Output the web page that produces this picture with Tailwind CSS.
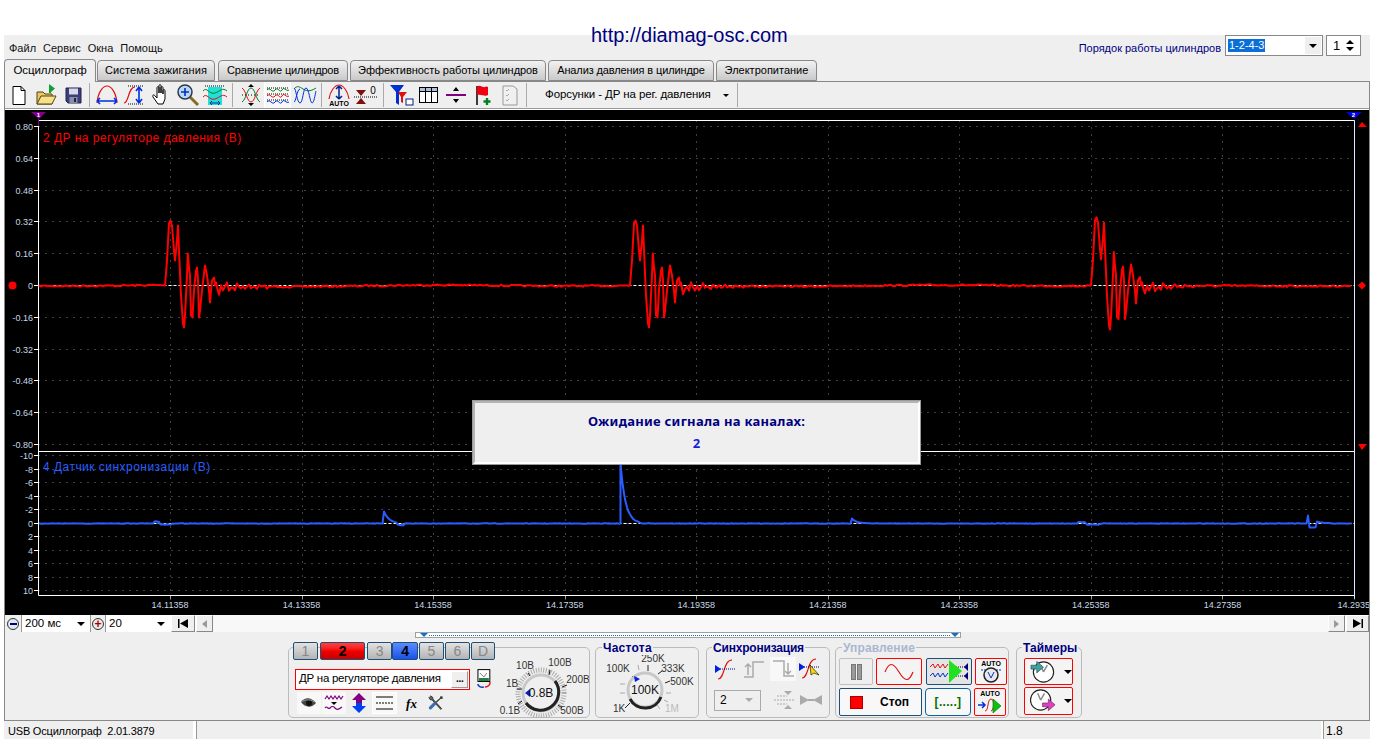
<!DOCTYPE html>
<html lang="ru">
<head>
  <meta charset="UTF-8">
  <title>USB Осциллограф</title>
  <script src="https://cdn.jsdelivr.net/npm/@tailwindcss/browser@4"></script>
</head>
<body class="bg-white">
<div class="relative w-[1382px] h-[744px] overflow-hidden bg-white font-['Liberation_Sans',sans-serif] text-[11px] text-black pt-[35px] pl-[4px]">

  <div class="absolute left-[591px] top-[23px] text-[20px] leading-[24px] text-[#000080] z-10">http://diamag-osc.com</div>

  <div class="w-[1366px] h-[704px] bg-[#efefef] flex flex-col">
    <!-- menu -->
    <div class="h-[25px] flex items-center pl-[5px] relative">
      <div class="flex gap-[7px] text-[#111] text-[11px] mt-[2px]">
        <span>Файл</span><span>Сервис</span><span>Окна</span><span>Помощь</span>
      </div>
      <div class="ml-auto flex items-start mr-[9px] -mt-[3px]">
        <span class="text-[#000080] mt-[5px] mr-[4px]">Порядок работы цилиндров</span>
        <div class="w-[98px] h-[21px] bg-white border border-[#888] flex items-center justify-between pl-[2px] pr-[1px]">
          <span class="bg-[#0a6fd8] text-white px-[1px] h-[13px] leading-[13px]">1-2-4-3</span>
          <span class="w-[16px] h-[17px] bg-[#efefef] flex items-center justify-center"><span class="w-0 h-0 border-x-[4px] border-x-transparent border-t-[4px] border-t-black"></span></span>
        </div>
        <div class="w-[35px] h-[21px] ml-[3px] bg-white border border-[#888] flex items-center justify-between pl-[6px] pr-[6px] text-[13px]">
          <span>1</span>
          <span class="flex flex-col gap-[3px]"><span class="block w-0 h-0 border-x-[4px] border-x-transparent border-b-[4px] border-b-black"></span><span class="block w-0 h-0 border-x-[4px] border-x-transparent border-t-[4px] border-t-black"></span></span>
        </div>
      </div>
    </div>

    <!-- tabs -->
    <div class="h-[22px] flex items-end relative z-10 -mb-[1px]">
      <div class="w-[92px] h-[23px] bg-[#efefef] border border-b-0 border-[#888] rounded-t-[4px] flex items-center justify-center text-[11.5px] tracking-[-0.1px]">Осциллограф</div>
      <div class="w-[118px] h-[21px] ml-[1px] mb-[1px] bg-linear-to-b from-[#f2f2f2] to-[#c9c9c9] border border-[#888] rounded-t-[4px] flex items-center justify-center tracking-[0.12px]">Система зажигания</div>
      <div class="w-[130px] h-[21px] ml-[3px] mb-[1px] bg-linear-to-b from-[#f2f2f2] to-[#c9c9c9] border border-[#888] rounded-t-[4px] flex items-center justify-center tracking-[-0.17px]">Сравнение цилиндров</div>
      <div class="w-[196px] h-[21px] ml-[2px] mb-[1px] bg-linear-to-b from-[#f2f2f2] to-[#c9c9c9] border border-[#888] rounded-t-[4px] flex items-center justify-center tracking-[-0.06px]">Эффективность работы цилиндров</div>
      <div class="w-[166px] h-[21px] ml-[2px] mb-[1px] bg-linear-to-b from-[#f2f2f2] to-[#c9c9c9] border border-[#888] rounded-t-[4px] flex items-center justify-center tracking-[-0.12px]">Анализ давления в цилиндре</div>
      <div class="w-[101px] h-[21px] ml-[2px] mb-[1px] bg-linear-to-b from-[#f2f2f2] to-[#c9c9c9] border border-[#888] rounded-t-[4px] flex items-center justify-center">Электропитание</div>
    </div>

    <!-- tab frame -->
    <div class="w-[1366px] h-[640px] border border-[#888] flex flex-col shrink-0">
      <!-- toolbar -->
      <div class="h-[27px] flex items-center border-b border-[#999] shrink-0">
        <div class="flex w-[27px] justify-center">
          <svg width="24" height="24" viewBox="0 0 24 24"><path d="M6 3.500h8l4 4v14H6z" fill="#fff" stroke="#000"/><path d="M14 3.500v4h4" fill="none" stroke="#000"/></svg>
        </div>
        <div class="flex w-[27px] justify-center">
          <svg width="24" height="24" viewBox="0 0 24 24"><path d="M3 9h6l2 2h7v10H3z" fill="#e8c860" stroke="#554410"/><path d="M3 21l4-8h15l-4 8z" fill="#f6e08a" stroke="#554410"/><path d="M15 10V1l6 4.500-4 3.500v1z" fill="#10a030"/></svg>
        </div>
        <div class="flex w-[27px] justify-center">
          <svg width="24" height="24" viewBox="0 0 24 24"><path d="M5 5h15v15H7l-2-2z" fill="#3a3f7a" stroke="#202050"/><rect x="8" y="5.500" width="9" height="6" fill="#d8d8e8"/><rect x="8.500" y="14" width="8" height="6" fill="#8a8fa8"/><rect x="13" y="15" width="2" height="4" fill="#202050"/></svg>
        </div>
        <div class="w-[1px] h-[24px] bg-[#aaa] mx-[3px] shrink-0"></div>
        <div class="flex w-[27px] justify-center">
          <svg width="26" height="24" viewBox="0 0 26 24" fill="none"><path d="M3 20C4 9 9 3 13 3s9 6 10 17" stroke="#e01010" stroke-width="1.200"/><path d="M3 18h20M3 18l3-3M3 18l3 3M23 18l-3-3M23 18l-3 3" stroke="#0030e0" stroke-width="1.600"/></svg>
        </div>
        <div class="flex w-[27px] justify-center">
          <svg width="26" height="24" viewBox="0 0 26 24" fill="none"><path d="M3 20c5 0 4-16 11-16" stroke="#e01010" stroke-width="1.200"/><path d="M7 3h15M7 21h15" stroke="#000" stroke-dasharray="1 1"/><path d="M18 4v16M18 4l-3 4M18 4l3 4M18 20l-3-4M18 20l3-4" stroke="#0030e0" stroke-width="1.600"/></svg>
        </div>
        <div class="flex w-[27px] justify-center">
          <svg width="24" height="24" viewBox="0 0 24 24"><path d="M9 21l-5-7c-1-2 1-3 2-1l2 2V5c0-2 2-2 2 0v5-7c0-2 2-2 2 0v7-5c0-2 2-2 2 0v6-3c0-2 2-2 2 0v8l-2 5z" fill="#fff" stroke="#000"/></svg>
        </div>
        <div class="flex w-[27px] justify-center">
          <svg width="26" height="24" viewBox="0 0 26 24" fill="none"><path d="M15 14l8 8" stroke="#8a6a20" stroke-width="3"/><circle cx="10" cy="9" r="7" fill="#bcd8f0" stroke="#2a3a50" stroke-width="1.500"/><path d="M10 5v8M6 9h8" stroke="#0030c0" stroke-width="1.600"/></svg>
        </div>
        <div class="flex w-[27px] justify-center">
          <svg width="26" height="24" viewBox="0 0 26 24" fill="none"><rect x="6" y="4" width="14" height="18" fill="#20e0d8"/><path d="M1 8c4-5 6 4 12 2s7-6 12-2" stroke="#008020"/><path d="M1 14c4-5 6 4 12 2s7-6 12-2" stroke="#e01010"/><path d="M3 3h20" stroke="#000" stroke-dasharray="1 1"/><path d="M8 20h10M8 20l2-2M8 20l2 2M18 20l-2-2M18 20l-2 2" stroke="#0030a0"/></svg>
        </div>
        <div class="w-[1px] h-[24px] bg-[#aaa] mx-[4px] shrink-0"></div>
        <div class="flex w-[27px] justify-center">
          <svg width="24" height="24" viewBox="0 0 24 24" fill="none"><path d="M3 5c4 2 5 14 9 14s5-12 9-14" stroke="#e01010"/><path d="M3 19c4-2 5-14 9-14s5 12 9 14" stroke="#008020"/><path d="M3 12h18" stroke="#000" stroke-dasharray="1 2"/><path d="M12 1l-3 3h6zM12 23l-3-3h6z" fill="#000"/></svg>
        </div>
        <div class="flex w-[27px] h-[26px] justify-center items-center bg-[#f8f8f8] border-x border-white">
          <svg width="24" height="24" viewBox="0 0 24 24" fill="none"><path d="M1 5h22M1 11h22M1 17h22" stroke="#000" stroke-dasharray="1 1"/><path d="M1 7c3-4 5 4 8 0s5 4 7 0 4 2 7 0" stroke="#008020"/><path d="M1 13c3-4 5 4 8 0s5 4 7 0 4 2 7 0" stroke="#e01010"/><path d="M1 19c3-4 5 4 8 0s5 4 7 0 4 2 7 0" stroke="#0030e0"/></svg>
        </div>
        <div class="flex w-[27px] justify-center">
          <svg width="26" height="24" viewBox="0 0 26 24" fill="none"><path d="M2 6c3-4 6-2 9 0s7 3 13-1" stroke="#008020"/><path d="M2 5c2 0 3 15 6 15s3-15 6-15 4 15 6 15 3-8 4-12" stroke="#0030e0"/><path d="M2 19c2 0 3-13 6-13" stroke="#0030e0"/></svg>
        </div>
        <div class="w-[1px] h-[24px] bg-[#aaa] mx-[3px] shrink-0"></div>
        <div class="flex w-[27px] justify-center">
          <svg width="26" height="24" viewBox="0 0 26 24" fill="none"><path d="M3 16C4 8 9 2 13 2s9 6 10 14" stroke="#e01010" stroke-width="1.200"/><path d="M13 3v13M13 3l-3 3M13 3l3 3M13 16l-3-3M13 16l3-3" stroke="#002090" stroke-width="1.500"/><text x="13" y="23" text-anchor="middle" font-size="7" font-weight="700" fill="#000">AUTO</text></svg>
        </div>
        <div class="flex w-[27px] justify-center">
          <svg width="26" height="24" viewBox="0 0 26 24" fill="none"><path d="M3 7h10l-5 6zM3 21h10l-5-6z" fill="#801010"/><path d="M1 14h24" stroke="#000" stroke-dasharray="1 1"/><text x="20" y="11" text-anchor="middle" font-size="10" fill="#000">0</text></svg>
        </div>
        <div class="w-[1px] h-[24px] bg-[#aaa] mx-[4px] shrink-0"></div>
        <div class="flex w-[27px] justify-center">
          <svg width="26" height="24" viewBox="0 0 26 24" fill="none"><path d="M1 2h14l-5 7v13l-3-2V9z" fill="#0030d0"/><path d="M9 9h9l-4 5v6l-2-1v-5z" fill="#e01010"/><rect x="17" y="16" width="7" height="6" fill="#fff" stroke="#002080"/></svg>
        </div>
        <div class="flex w-[27px] justify-center">
          <svg width="22" height="20" viewBox="0 0 22 20" fill="none"><rect x="1.500" y="2.500" width="18" height="15" stroke="#000" fill="#fff"/><rect x="1.500" y="2.500" width="18" height="4" fill="#b0c0e0" stroke="#000"/><path d="M7.500 2.500v15M13.500 2.500v15" stroke="#000"/></svg>
        </div>
        <div class="flex w-[27px] justify-center">
          <svg width="24" height="24" viewBox="0 0 24 24" fill="none"><path d="M2 12h20" stroke="#800080" stroke-width="2"/><path d="M12 4l-3 4h6zM12 20l-3-4h6z" fill="#000"/></svg>
        </div>
        <div class="flex w-[27px] justify-center">
          <svg width="22" height="24" viewBox="0 0 22 24" fill="none"><path d="M5 3v19" stroke="#000" stroke-width="1.500"/><path d="M5 4c3-3 5 1 8 0s2 0 3 0v8c-3 2-6-1-11 0z" fill="#f00010"/><path d="M15 15v7M11.500 18.500h7" stroke="#008020" stroke-width="2.400"/></svg>
        </div>
        <div class="flex w-[27px] justify-center">
          <svg width="22" height="24" viewBox="0 0 22 24" fill="none"><path d="M4 3h10l4 3v16H4z" fill="#f0f0f0" stroke="#999"/><path d="M7 7l1 1 2-2M7 12l1 1 2-2M7 17l1 1 2-2" stroke="#aaa"/></svg>
        </div>
        <div class="w-[1px] h-[24px] bg-[#aaa] ml-[3px] mr-[18px] shrink-0"></div>
        <span class="text-[11.5px] tracking-[-0.1px] whitespace-nowrap">Форсунки - ДР на рег. давления</span>
        <span class="ml-[12px] w-0 h-0 border-x-[3px] border-x-transparent border-t-[3px] border-t-black"></span>
        <div class="w-[1px] h-[24px] bg-[#aaa] ml-[8px] shrink-0"></div>
      </div>

      <div class="h-[1px] bg-white shrink-0"></div>

      <!-- chart -->
      <div class="relative h-[505px] bg-black shrink-0">
        <svg id="chart" width="1364" height="505" viewBox="5 110 1364 505" class="block font-['Liberation_Sans',sans-serif]"></svg>
        <div class="absolute left-[468px] top-[291px] w-[447px] h-[63px] bg-[#efefef] border-[2px] border-[#b4b4b4] border-r-white border-b-white outline outline-[#9a9a9a] flex flex-col items-center pt-[9px]">
          <span class="font-bold text-[13px] tracking-[0.27px] leading-[18px] text-[#000080] font-['Noto_Sans',sans-serif]">Ожидание сигнала на каналах:</span>
          <span class="font-bold text-[13px] leading-[18px] mt-[4px] text-[#1a20e0] font-['Noto_Sans',sans-serif]">2</span>
        </div>
      </div>

      <!-- scroll row -->
      <div class="h-[17px] flex items-stretch shrink-0 bg-white">
        <div class="w-[17px] bg-[#efefef] border-r border-[#999] flex items-center justify-center">
          <span class="w-[12px] h-[12px] rounded-full border border-[#333] bg-[#e4e8f0] flex items-center justify-center"><span class="w-[7px] h-[2px] bg-[#000080]"></span></span>
        </div>
        <div class="w-[68px] flex items-center justify-between pl-[3px] pr-[5px] text-[11.5px]"><span>200 мс</span><span class="w-0 h-0 border-x-[4px] border-x-transparent border-t-[4px] border-t-black"></span></div>
        <div class="w-[16px] bg-[#efefef] border-x border-[#999] flex items-center justify-center">
          <span class="w-[12px] h-[12px] rounded-full border border-[#333] bg-[#f0e8e8] flex items-center justify-center text-[#a00000] font-bold text-[12px] leading-[10px]">+</span>
        </div>
        <div class="w-[65px] flex items-center justify-between pl-[3px] pr-[6px] text-[11.5px]"><span>20</span><span class="w-0 h-0 border-x-[4px] border-x-transparent border-t-[4px] border-t-black"></span></div>
        <div class="w-[24px] bg-[#efefef] border border-[#888] border-l-white border-t-white flex items-center justify-center">
          <svg width="12" height="9" viewBox="0 0 12 9"><path d="M1 0v9h1.500V0zM11 0v9L3 4.500z" fill="#000"/></svg>
        </div>
        <div class="w-[17px] ml-[1px] bg-[#efefef] border border-[#888] border-l-white border-t-white flex items-center justify-center">
          <span class="w-0 h-0 border-y-[4px] border-y-transparent border-r-[5px] border-r-[#999]"></span>
        </div>
        <div class="flex-1 bg-[#f8f8f8]"></div>
        <div class="w-[17px] bg-[#efefef] border border-[#888] border-l-white border-t-white flex items-center justify-center">
          <span class="w-0 h-0 border-y-[4px] border-y-transparent border-l-[5px] border-l-[#999]"></span>
        </div>
        <div class="w-[23px] ml-[1px] bg-[#efefef] border border-[#888] border-l-white border-t-white flex items-center justify-center">
          <svg width="12" height="9" viewBox="0 0 12 9"><path d="M11 0v9H9.500V0zM1 0v9l8-4.500z" fill="#000"/></svg>
        </div>
      </div>

      <!-- bottom panel -->
      <div class="flex-1 flex flex-col">
        <div class="ml-[410px] w-[546px] h-[6px] border border-[#a0a0a0] bg-white flex items-center relative">
          <span class="ml-[4px] w-0 h-0 border-x-[4px] border-x-transparent border-t-[4px] border-t-[#1070d0]"></span>
          <span class="flex-1 mx-[1px] border-t border-dotted border-[#1070d0]"></span>
          <span class="mr-[1px] w-0 h-0 border-x-[4px] border-x-transparent border-t-[4px] border-t-[#1070d0]"></span>
        </div>

        <div class="flex mt-[9px] ml-[283px] h-[71px] items-start">
          <!-- channel group -->
          <div class="relative w-[302px] h-[71px] border border-[#bbb] rounded-[5px] flex shrink-0">
            <div class="flex flex-col w-[206px] pl-[4px] shrink-0">
              <div class="flex -mt-[6px] gap-[1px] h-[18px] text-[14px] leading-[16px] text-center">
                <span class="w-[26px] border border-[#1d4f78] rounded-[2px] bg-linear-to-b from-[#e2e2e2] to-[#b4b4b4] text-[#888]">1</span>
                <span class="w-[47px] ml-[1px] border border-[#1d4f78] rounded-[2px] bg-linear-to-b from-[#ff4040] via-[#f00000] to-[#c80000] font-bold">2</span>
                <span class="w-[26px] ml-[1px] border border-[#1d4f78] rounded-[2px] bg-linear-to-b from-[#e2e2e2] to-[#b4b4b4] text-[#888]">3</span>
                <span class="w-[27px] -ml-[1px] border border-[#1d4f78] rounded-[2px] bg-linear-to-b from-[#5a8cff] to-[#1a50e8] font-bold">4</span>
                <span class="w-[26px] border border-[#1d4f78] rounded-[2px] bg-linear-to-b from-[#e2e2e2] to-[#b4b4b4] text-[#888]">5</span>
                <span class="w-[26px] border border-[#1d4f78] rounded-[2px] bg-linear-to-b from-[#e2e2e2] to-[#b4b4b4] text-[#888]">6</span>
                <span class="w-[25px] border border-[#1d4f78] rounded-[2px] bg-linear-to-b from-[#e2e2e2] to-[#b4b4b4] text-[#888]">D</span>
              </div>
              <div class="flex items-center mt-[8px] ml-[2px]">
                <div class="w-[177px] h-[21px] bg-white border border-[#f00] flex items-center justify-between pl-[3px] pr-[1px] text-[11.5px] tracking-[-0.28px] whitespace-nowrap">
                  <span>ДР на регуляторе давления</span>
                  <span class="w-[17px] h-[17px] bg-[#efefef] border border-[#999] border-l-white border-t-white flex items-center justify-center font-bold leading-[10px] text-[10px]">...</span>
                </div>
                <svg class="ml-[3px]" width="22" height="22" viewBox="0 0 22 22" fill="none"><rect x="5" y="1.500" width="12" height="12" fill="#fff" stroke="#000"/><path d="M7 5l4 4 3-4" stroke="#808080"/><rect x="6" y="10" width="10" height="3" fill="#208040"/><path d="M5 16c0 3 4 4 6 3" stroke="#0030c0" stroke-width="1.500"/><path d="M17 14c1 3-2 5-5 5" stroke="#e01010" stroke-width="1.500"/></svg>
              </div>
              <div class="flex items-center mt-[2px] ml-[4px] h-[22px]">
                <span class="w-[24px] h-[22px] bg-[#f8f8f8] flex items-center justify-center">
                  <svg width="18" height="12" viewBox="0 0 18 12"><path d="M1 5c4-5 10-5 15 1-4 5-11 5-15-1z" fill="#444"/><circle cx="9" cy="6" r="3" fill="#111"/><path d="M1 5c5-3 10-3 15 1" stroke="#999" fill="none"/></svg>
                </span>
                <span class="w-[24px] h-[22px] ml-[1px] bg-[#f8f8f8] flex items-center justify-center">
                  <svg width="20" height="18" viewBox="0 0 20 18" fill="none"><path d="M1 5l2-3 2 3 2-3 2 3 2-3 2 3 2-3 2 3 2-3" stroke="#800080" stroke-width="1.200"/><path d="M7 8h6l-3 3z" fill="#000"/><path d="M1 14c2-3 3 2 5 0s3-2 5 0 3 2 7-1" stroke="#800080" stroke-width="1.200"/></svg>
                </span>
                <span class="w-[24px] flex justify-center ml-[1px]">
                  <svg width="16" height="20" viewBox="0 0 16 20"><path d="M8 0l7 7h-4v3H5V7H1z" fill="#800080"/><path d="M8 20l7-7h-4v-3H5v3H1z" fill="#0040f0"/></svg>
                </span>
                <span class="w-[25px] h-[22px] ml-[1px] bg-[#f8f8f8] border border-white flex items-center justify-center">
                  <svg width="19" height="16" viewBox="0 0 19 16" fill="none"><path d="M1 2h17M1 14h17" stroke="#000"/><path d="M1 8h17" stroke="#000" stroke-dasharray="2 1"/></svg>
                </span>
                <i class="w-[27px] text-center font-['Liberation_Serif',serif] font-bold text-[13px] leading-none ml-[1px]">fx</i>
                <span class="w-[16px] flex justify-center ml-[3px]">
                  <svg width="20" height="20" viewBox="0 0 20 20" fill="none"><path d="M3 1l3 2v2l11 12-1 1L5 6H3L1 3" stroke="#333" stroke-width="1.200" fill="#666"/><path d="M18 2l-8 7" stroke="#333" stroke-width="1.500"/><path d="M16 1l3 3-2 1-2-2z" fill="#333"/><path d="M8 11l-5 5" stroke="#3a70b0" stroke-width="4" stroke-linecap="round"/></svg>
                </span>
              </div>
            </div>
            <svg class="mt-[2px]" width="94" height="68" viewBox="495 650 94 68" font-size="10" fill="#333">
              <circle cx="541" cy="693" r="23" fill="none" stroke="#aaa" stroke-width="5" stroke-dasharray="1 1.500"/>
              <path d="M528 673l2 3M550 670l-1 5M567 685l-5 2M517 689h5M518 704l4-3M562 708l-4-3" stroke="#111"/>
              <circle cx="541" cy="693" r="18" fill="#efefef" stroke="#c8c8c8" stroke-width="3"/>
              <path d="M555 681A18 18 0 0 1 526 703" fill="none" stroke="#222" stroke-width="3"/>
              <path d="M525 693l5-4v8z" fill="#0020e0"/>
              <text x="541" y="697" text-anchor="middle" font-size="12" fill="#111">0.8В</text>
              <text x="525" y="669" text-anchor="middle">10В</text>
              <text x="560" y="666" text-anchor="middle">100В</text>
              <text x="578" y="683" text-anchor="middle">200В</text>
              <text x="512" y="687" text-anchor="middle">1В</text>
              <text x="510" y="714" text-anchor="middle">0.1В</text>
              <text x="572" y="714" text-anchor="middle">500В</text>
            </svg>
          </div>

          <!-- frequency group -->
          <div class="relative w-[104px] h-[71px] ml-[5px] border border-[#bbb] rounded-[5px] shrink-0">
            <span class="absolute left-[6px] -top-[7px] px-[1px] bg-[#efefef] font-bold text-[12px] leading-[14px] tracking-[0.25px] text-[#000080]">Частота</span>
            <svg class="block" width="102" height="68" viewBox="596 650 102 68" font-size="10" fill="#333">
              <path d="M648 667v6M632 678l3 3M662 673l-4 3M670 683l-5 2M625 710l5-5" stroke="#222"/>
              <path d="M620 686h5M620 695h5M666 695h5M668 704l-4-2M660 711l-3-4M638 667l1 5" stroke="#aaa"/>
              <circle cx="645" cy="692" r="17" fill="#efefef" stroke="#c8c8c8" stroke-width="3"/>
              <path d="M661 699A17 17 0 0 1 630 701" fill="none" stroke="#222" stroke-width="3"/>
              <path d="M634 678l6 3-5 3z" fill="#0020e0"/>
              <text x="645" y="696" text-anchor="middle" font-size="12" fill="#111">100K</text>
              <text x="653" y="664" text-anchor="middle">250K</text>
              <text x="618" y="674" text-anchor="middle">100K</text>
              <text x="673" y="674" text-anchor="middle">333K</text>
              <text x="682" y="687" text-anchor="middle">500K</text>
              <text x="619" y="714" text-anchor="middle">1K</text>
              <text x="672" y="714" text-anchor="middle" fill="#bbb">1M</text>
            </svg>
          </div>

          <!-- sync group -->
          <div class="relative w-[124px] h-[71px] ml-[7px] border border-[#bbb] rounded-[5px] shrink-0">
            <span class="absolute left-[5px] -top-[7px] px-[1px] bg-[#efefef] font-bold text-[12px] leading-[14px] tracking-[-0.2px] text-[#000080]">Синхронизация</span>
            <div class="flex items-center mt-[9px] ml-[7px] h-[24px]">
              <svg width="26" height="22" viewBox="0 0 26 22" fill="none"><path d="M4 21c7 0 5-19 14-19" stroke="#e01010" stroke-width="1.200"/><path d="M6 11h16" stroke="#000080" stroke-dasharray="1 1"/><path d="M1 7l6 4-6 4z" fill="#0020e0"/></svg>
              <svg class="ml-[1px]" width="26" height="22" viewBox="0 0 26 22" fill="none"><path d="M3 19h9V4h11" stroke="#aaa" stroke-width="1.500"/><path d="M7 6v11M4 9l3-3 3 3" stroke="#aaa" stroke-width="1.500"/></svg>
              <span class="w-[26px] h-[24px] ml-[3px] bg-[#f8f8f8] flex items-center justify-center"><svg width="24" height="22" viewBox="0 0 24 22" fill="none"><path d="M2 3h11v15h10" stroke="#aaa" stroke-width="1.500"/><path d="M17 5v11M14 13l3 3 3-3" stroke="#aaa" stroke-width="1.500"/></svg></span>
              <svg class="ml-[2px]" width="26" height="24" viewBox="0 0 26 24" fill="none"><path d="M4 21c7 0 5-19 14-19" stroke="#e01010" stroke-width="1.200"/><path d="M6 10h16" stroke="#000080" stroke-dasharray="1 1"/><path d="M1 6l6 4-6 4z" fill="#0020e0"/><path d="M12 8l1 10 3-2 5 2z" fill="#ffd800" stroke="#000" stroke-width=".6"/></svg>
            </div>
            <div class="flex items-center mt-[8px] ml-[7px]">
              <div class="w-[47px] h-[21px] border border-[#aaa] flex items-center justify-between pl-[5px] pr-[7px] text-[12px]"><span>2</span><span class="w-0 h-0 border-x-[4px] border-x-transparent border-t-[4px] border-t-[#aaa]"></span></div>
              <svg class="ml-[11px]" width="24" height="22" viewBox="0 0 24 22" fill="none"><path d="M2 11h20M5 7h10M5 15h10" stroke="#aaa" stroke-dasharray="2 1"/><path d="M12 2h8l-4 4zM12 20h8l-4-4z" fill="#aaa"/></svg>
              <svg class="ml-[3px]" width="24" height="14" viewBox="0 0 24 14"><path d="M1 2l9 5-9 5zM23 2l-9 5 9 5z" fill="#aaa"/><rect x="9" y="6" width="6" height="2" fill="#aaa"/></svg>
            </div>
          </div>

          <!-- control group -->
          <div class="relative w-[174px] h-[71px] ml-[5px] border border-[#bbb] rounded-[5px] shrink-0">
            <span class="absolute left-[6px] -top-[7px] px-[1px] bg-[#efefef] font-bold text-[12px] leading-[14px] tracking-[0.1px] text-[#a8b8d0]">Управление</span>
            <div class="flex mt-[10px] ml-[3px] gap-[3px] h-[27px]">
              <span class="w-[34px] border border-[#c0c0c0] rounded-[2px] flex items-center justify-center gap-[1px]"><span class="w-[5px] h-[16px] bg-[#999] border border-[#777]"></span><span class="w-[5px] h-[16px] bg-[#999] border border-[#777]"></span></span>
              <span class="w-[46px] bg-[#f4f4f4] border border-[#f00] rounded-[2px] flex items-center justify-center"><svg width="30" height="20" viewBox="0 0 30 20" fill="none"><path d="M1 10C5 0 9 0 15 10s10 10 14 0" stroke="#e01010" stroke-width="1.200"/></svg></span>
              <span class="w-[46px] ml-[1px] bg-[#e4e4e4] border border-[#1d4f78] rounded-[2px] flex items-center justify-center relative"><svg width="42" height="23" viewBox="0 0 42 23" fill="none"><path d="M2 7l3-3 2 4 3-4 2 4 3-4 2 4 3-4" stroke="#e01010"/><path d="M2 16l3-3 2 4 3-4 2 4 3-4 2 4 3-4" stroke="#0030d0"/><path d="M28 7h12M28 16h12" stroke="#000" stroke-dasharray="1 1"/><path d="M40 3l-4 4 4 4zM40 12l-4 4 4 4z" fill="#000080"/><path d="M21 0l13 11-13 12z" fill="#20e020"/></svg></span>
              <span class="w-[32px] bg-[#f4f4f4] border border-[#f00] rounded-[2px] flex flex-col items-center">
                <svg width="26" height="25" viewBox="0 0 26 25" fill="none"><text x="13" y="7" text-anchor="middle" font-size="7" font-weight="700" fill="#000">AUTO</text><path d="M3 11h20" stroke="#0030d0" stroke-dasharray="2 1"/><circle cx="13" cy="16" r="7" fill="#e8e8e8" stroke="#222" stroke-width="1.500"/><path d="M10 13l3 6 3-6" stroke="#0030d0"/></svg>
              </span>
            </div>
            <div class="flex mt-[3px] ml-[3px] gap-[3px] h-[28px]">
              <span class="w-[83px] bg-[#f8f8f8] border border-[#1d4f78] rounded-[2px] flex items-center pl-[10px]">
                <span class="w-[13px] h-[13px] bg-[#f00] border border-[#a00]"></span>
                <span class="ml-[17px] font-bold text-[12px]">Стоп</span>
              </span>
              <span class="w-[46px] bg-[#f8f8f8] border border-[#1060a0] rounded-[4px] flex items-center justify-center font-bold text-[#007000] text-[12px] tracking-[0.3px]">[.....]</span>
              <span class="w-[32px] bg-[#f4f4f4] border border-[#f00] rounded-[2px] flex flex-col items-center">
                <svg width="26" height="26" viewBox="0 0 26 26" fill="none"><text x="13" y="7" text-anchor="middle" font-size="7" font-weight="700" fill="#000">AUTO</text><path d="M1 16h7M5 13l3 3-3 3" stroke="#0030d0" stroke-width="1.500"/><path d="M8 22c4 0 2-12 6-12s3 12 0 12" stroke="#e01010"/><path d="M16 10l8 7-8 7z" fill="#10c010" stroke="#060" stroke-width=".6"/></svg>
              </span>
            </div>
          </div>

          <!-- timers group -->
          <div class="relative w-[66px] h-[71px] ml-[7px] border border-[#bbb] rounded-[5px] shrink-0">
            <span class="absolute left-[5px] -top-[7px] px-[1px] bg-[#efefef] font-bold text-[12px] leading-[14px] text-[#000080]">Таймеры</span>
            <div class="flex flex-col ml-[7px] mt-[10px] gap-[2px]">
              <span class="w-[49px] h-[27px] bg-[#f4f4f4] border border-[#f00] rounded-[2px] flex items-center pl-[5px]">
                <svg width="28" height="25" viewBox="0 0 28 25" fill="none"><circle cx="14" cy="13" r="10.500" fill="#fff" stroke="#222" stroke-width="1.200"/><path d="M14 13l-3-7M14 13l4-7" stroke="#888" stroke-width="1.500"/><path d="M1 6h6V2l7 6-7 6v-4H1z" fill="#40a0a0" stroke="#204040" stroke-width=".6"/></svg>
                <span class="ml-[7px] w-0 h-0 border-x-[4px] border-x-transparent border-t-[4px] border-t-black"></span>
              </span>
              <span class="w-[49px] h-[28px] bg-[#f4f4f4] border border-[#f00] rounded-[2px] flex items-center pl-[5px]">
                <svg width="28" height="26" viewBox="0 0 28 26" fill="none"><circle cx="11" cy="12" r="10.500" fill="#fff" stroke="#222" stroke-width="1.200"/><path d="M11 12l-3-7M11 12l4-7" stroke="#888" stroke-width="1.500"/><path d="M13 15h6v-4l7 6-7 6v-4h-6z" fill="#e040c0" stroke="#602050" stroke-width=".6"/></svg>
                <span class="ml-[7px] w-0 h-0 border-x-[4px] border-x-transparent border-t-[4px] border-t-black"></span>
              </span>
            </div>
          </div>
        </div>
      </div>
    </div>

    <!-- status bar -->
    <div class="h-[18px] flex text-[11px] leading-[17px] bg-[#efefef] shrink-0">
      <div class="w-[189px] pl-[4px] pt-[2px] tracking-[-0.2px] whitespace-nowrap">USB Осциллограф&nbsp; 2.01.3879</div>
      <div class="w-[3px] bg-white"></div>
      <div class="flex-1 border-l border-[#999]"></div>
      <div class="w-[2px] bg-white"></div>
      <div class="w-[47px] border-l border-[#999] pl-[2px] pt-[2px] text-[12px]">1.8</div>
    </div>
  </div>
</div>

<script>
  const chart = document.getElementById('chart');
  const left = 38.5, right = 1354.5, top1 = 120.5, mid = 451.5, bottom = 595.5;

  let seed = 7;
  const rnd = () => { seed = (seed * 16807) % 2147483647; return seed / 2147483647 - 0.5; };

  const xTicks = [];
  for (let i = 0; i < 10; i++) xTicks.push(170 + i * 131.55);
  const xLabels = ['14.11358','14.13358','14.15358','14.17358','14.19358','14.21358','14.23358','14.25358','14.27358','14.2935'];
  const topLabels = ['0.80','0.64','0.48','0.32','0.16','0','-0.16','-0.32','-0.48','-0.64','-0.80'];
  const lowLabels = ['-10','-8','-6','-4','-2','0','2','4','6','8','10'];

  let out = '';
  const dot = 'stroke="#808080" stroke-dasharray="1 6"';
  topLabels.forEach((t, i) => {
    const y = Math.round(126 + i * 31.8) + 0.5;
    out += `<line x1="${left}" x2="${right}" y1="${y}" y2="${y}" ${dot}/>`;
    out += `<line x1="34" x2="${left}" y1="${y}" y2="${y}" stroke="#fff"/>`;
    out += `<text x="33" y="${y + 3}" text-anchor="end" font-size="9" fill="#c8d8e4">${t}</text>`;
  });
  lowLabels.forEach((t, i) => {
    const y = Math.round(455 + i * 13.52) + 0.5;
    out += `<line x1="${left}" x2="${right}" y1="${y}" y2="${y}" ${dot}/>`;
    out += `<line x1="34" x2="${left}" y1="${y}" y2="${y}" stroke="#fff"/>`;
    out += `<text x="33" y="${y + 3}" text-anchor="end" font-size="9" fill="#c8d8e4">${t}</text>`;
  });
  xTicks.forEach((x, i) => {
    const xp = Math.round(x) + 0.5;
    out += `<line x1="${xp}" x2="${xp}" y1="${top1}" y2="${bottom}" ${dot}/>`;
    out += `<line x1="${xp}" x2="${xp}" y1="${bottom}" y2="${bottom + 4}" stroke="#999"/>`;
    const anchor = i === 9 ? 'end' : 'middle';
    out += `<text x="${i === 9 ? 1370 : x}" y="608" text-anchor="${anchor}" font-size="9" fill="#c8d8e4">${xLabels[i]}</text>`;
  });

  // frame
  out += `<path d="M${left} ${bottom}V${top1}H${right}" fill="none" stroke="#fff"/>`;
  out += `<line x1="${left}" x2="${right}" y1="${mid}" y2="${mid}" stroke="#fff"/>`;
  out += `<line x1="${left}" x2="${right}" y1="${bottom}" y2="${bottom}" stroke="#fff"/>`;
  out += `<line x1="${right}" x2="${right}" y1="${top1}" y2="${bottom + 3}" stroke="#e0e8ff"/>`;

  // zero lines
  out += `<line x1="${left}" x2="${right}" y1="285.5" y2="285.5" stroke="#fff" stroke-dasharray="3 2"/>`;
  out += `<line x1="${left}" x2="${right}" y1="523.5" y2="523.5" stroke="#fff" stroke-dasharray="3 2"/>`;

  // red trace
  const burst = [[0,0],[2,-25],[4,-62],[5.5,-65],[7,-60],[9,-35],[10,-25],[12,-45],[13,-60],[14,-35],[16,10],[18,38],[19,42],[20,30],[22,-10],[22.8,-32],[24,-18],[25,-10],[26,30],[27.5,32],[29,5],[31,-15],[32,-18],[33,-5],[34,32],[35,25],[37,5],[39,-12],[40,-20],[42,-10],[43,-2],[44,5],[45,17],[46,5],[47,-5],[49,-8],[50,0],[51,-3]];
  const starts = [165, 630, 1091];
  const red = [];
  for (let x = 39; x < 1353; x += 2) {
    const s = starts.find(v => x >= v && x < v + 52);
    if (s !== undefined) {
      if (!red.some(p => p[2] === s)) burst.forEach(p => red.push([s + p[0], 285.5 + p[1] * (s === 1091 ? 1.05 : 1), s]));
      continue;
    }
    const last = starts.filter(v => x >= v + 52).pop();
    let y = 285.5 + rnd() * 1.6 + Math.sin(x / 40) * 0.5;
    if (last !== undefined) {
      const d = x - last - 52;
      y += Math.exp(-d / 26) * 5.5 * (Math.sin(d * 1.15) + 0.6 * Math.sin(d * 0.53)) + Math.exp(-d / 60) * 2.5;
    }
    red.push([x, y, 0]);
  }
  out += `<polyline fill="none" stroke="#f00" stroke-width="2" stroke-linejoin="round" points="${red.map(p => p[0] + ',' + p[1].toFixed(1)).join(' ')}"/>`;

  // blue trace
  const blue = [];
  for (let x = 39; x < 1353; x += 1.5) {
    let y = 523.5 + rnd() * 0.5;
    const decay = (x0, h, tau) => (x >= x0 ? -h * Math.exp(-(x - x0) / tau) : 0);
    if (x > 154 && x < 160) y -= 2;
    if (x > 160 && x < 172) y += 1;
    y += decay(384, 12, 5);
    if (x > 396 && x < 404) y += 2;
    y += decay(620.5, 60, 5);
    if (x > 640 && x < 648) y += 0.6;
    y += decay(851, 6, 5);
    if (x > 1078 && x < 1086) y -= 1.5;
    if (x > 1086 && x < 1100) y += 1;
    if (x > 1307 && x < 1309) y -= 8;
    if (x >= 1309 && x < 1316) y += 4;
    if (x >= 1316 && x < 1330) y -= 2 * Math.exp(-(x - 1316) / 7);
    blue.push([x, y]);
  }
  blue.splice(blue.findIndex(p => p[0] >= 620.5), 0, [620.5, 523.5], [620.5, 460]);
  out += `<polyline fill="none" stroke="#2a5cff" stroke-width="2" stroke-linejoin="round" points="${blue.map(p => p[0] + ',' + p[1].toFixed(1)).join(' ')}"/>`;

  // labels and markers
  out += `<text x="43" y="142" font-size="12" letter-spacing="0.46" fill="#f00">2 ДР на регуляторе давления (В)</text>`;
  out += `<text x="43" y="471" font-size="12" letter-spacing="0.47" fill="#2a5cff">4 Датчик синхронизации (В)</text>`;
  out += `<path d="M31 112h15l-7 7z" fill="#800090"/><line x1="38.500" x2="38.500" y1="118" y2="126" stroke="#800090"/>`;
  out += `<text x="38.500" y="117" text-anchor="middle" font-size="6" font-weight="700" fill="#fff">1</text>`;
  out += `<path d="M1346 112h16l-8 7z" fill="#0000e0"/><text x="1353.500" y="117" text-anchor="middle" font-size="6" font-weight="700" fill="#fff">2</text>`;
  out += `<path d="M1358 127l4-5 5 5z" fill="#f00"/><path d="M1358 444h9l-5 6z" fill="#f00"/>`;
  out += `<circle cx="12.500" cy="285.500" r="4" fill="#f00"/><path d="M1358 285.500l4-4 4 4-4 4z" fill="#f00"/>`;
  chart.innerHTML = out;
</script>
</body>
</html>
